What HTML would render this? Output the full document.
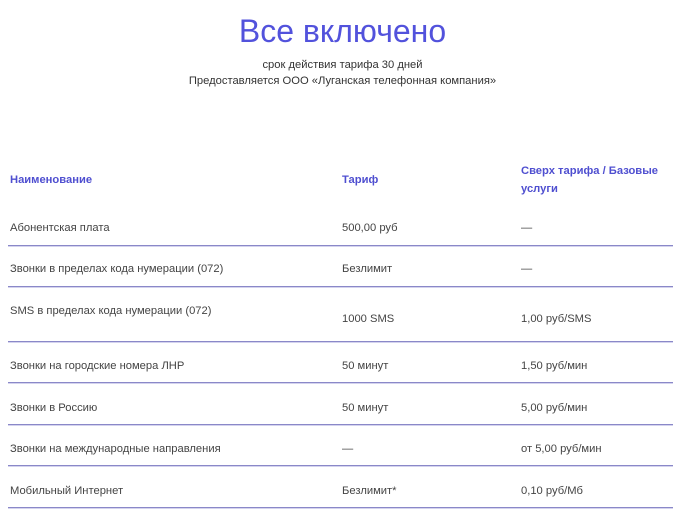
<!DOCTYPE html>
<html><head><meta charset="utf-8"><style>
body{margin:0;width:700px;height:526px;background:#fff;font-family:"Liberation Sans",Arial,sans-serif;position:relative;overflow:hidden;color:#444}
.a{position:absolute;white-space:nowrap;font-size:11.2px;line-height:14px}
.h{color:#4f4fd0;font-weight:bold}
.l{position:absolute;left:8px;width:665px;height:1px;background:#8a88c8;border-bottom:1px solid #d4d3ee}
</style></head><body>
<div class="a" style="left:0;width:685px;text-align:center;top:12px;font-size:32px;line-height:38px;color:#5252dc">Все включено</div>
<div class="a" style="left:0;width:685px;text-align:center;top:58px;color:#333">срок действия тарифа 30 дней</div>
<div class="a" style="left:0;width:685px;text-align:center;top:74px;color:#333">Предоставляется ООО «Луганская телефонная компания»</div>

<div class="a h" style="left:10px;top:173px">Наименование</div>
<div class="a h" style="left:342px;top:173px">Тариф</div>
<div class="a h" style="left:521px;top:164px">Сверх тарифа / Базовые</div>
<div class="a h" style="left:521px;top:182px">услуги</div>

<div class="a" style="left:10px;top:221px">Абонентская плата</div>
<div class="a" style="left:342px;top:221px">500,00 руб</div>
<div class="a" style="left:521px;top:221px">—</div>
<div class="l" style="top:245px"></div>

<div class="a" style="left:10px;top:262px">Звонки в пределах кода нумерации (072)</div>
<div class="a" style="left:342px;top:262px">Безлимит</div>
<div class="a" style="left:521px;top:262px">—</div>
<div class="l" style="top:286px"></div>

<div class="a" style="left:10px;top:304px">SMS в пределах кода нумерации (072)</div>
<div class="a" style="left:342px;top:312px">1000 SMS</div>
<div class="a" style="left:521px;top:312px">1,00 руб/SMS</div>
<div class="l" style="top:341px"></div>

<div class="a" style="left:10px;top:359px">Звонки на городские номера ЛНР</div>
<div class="a" style="left:342px;top:359px">50 минут</div>
<div class="a" style="left:521px;top:359px">1,50 руб/мин</div>
<div class="l" style="top:382px"></div>

<div class="a" style="left:10px;top:401px">Звонки в Россию</div>
<div class="a" style="left:342px;top:401px">50 минут</div>
<div class="a" style="left:521px;top:401px">5,00 руб/мин</div>
<div class="l" style="top:424px"></div>

<div class="a" style="left:10px;top:442px">Звонки на международные направления</div>
<div class="a" style="left:342px;top:442px">—</div>
<div class="a" style="left:521px;top:442px">от 5,00 руб/мин</div>
<div class="l" style="top:465px"></div>

<div class="a" style="left:10px;top:484px">Мобильный Интернет</div>
<div class="a" style="left:342px;top:484px">Безлимит*</div>
<div class="a" style="left:521px;top:484px">0,10 руб/Мб</div>
<div class="l" style="top:507px"></div>
</body></html>
